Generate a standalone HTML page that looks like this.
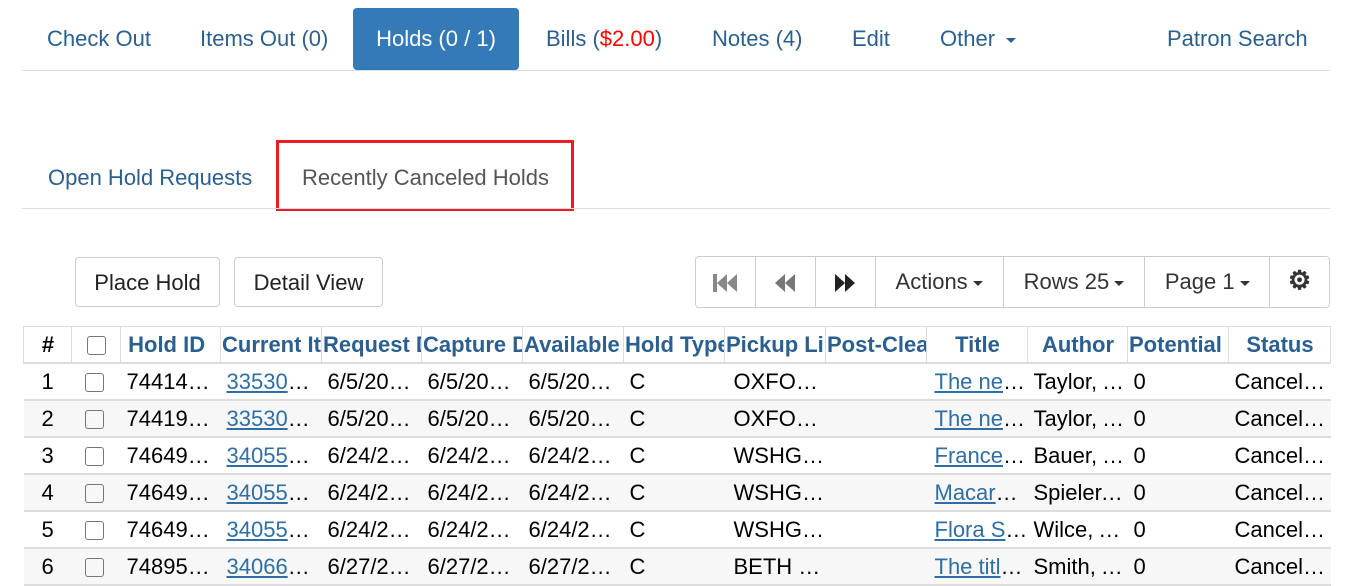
<!DOCTYPE html>
<html><head><style>
body{margin:0;width:1360px;height:556px;overflow:hidden;background:#fff;font-family:"Liberation Sans",sans-serif;font-size:22px;color:#000;position:relative}
.a{position:absolute;white-space:nowrap}
.nav{color:#2a5f8f;top:26px}
.hr{position:absolute;left:22px;width:1308px;height:1px;background:#ddd}
.btn{position:absolute;border:1px solid #ccc;border-radius:4px;background:#fff;height:50px;line-height:50px;text-align:center;color:#222;box-sizing:border-box}
.grp{position:absolute;top:256px;height:52px;left:695px;width:635px;border:1px solid #ccc;border-radius:4px;box-sizing:border-box;display:flex}
.grp div{border-right:1px solid #ccc;height:50px;line-height:50px;text-align:center;color:#333;box-sizing:border-box}
.grp div:last-child{border-right:none}
.car{display:inline-block;width:0;height:0;border-left:5px solid transparent;border-right:5px solid transparent;border-top:5px solid #333;vertical-align:middle;margin-left:5px}
table{position:absolute;left:23px;top:326px;border-collapse:collapse;table-layout:fixed;width:1307px}
td,th{height:35px;padding:0 0 0 6px;overflow:hidden;white-space:nowrap;text-overflow:ellipsis;border-bottom:2px solid #ddd;text-align:left;font-size:22px}
th{border:1px solid #ddd;border-bottom:2px solid #ddd;color:#2a5f8f;padding:0 0 0 1px;text-overflow:clip}
th.c{text-align:center}
tr.g td{background:#f7f7f7}
td a{color:#2f6ea5;text-decoration:underline}
.cb{display:inline-block;width:17px;height:17px;border:1px solid #777;border-radius:3px;vertical-align:middle}
</style></head><body>
<div class="a nav" style="left:47px">Check Out</div>
<div class="a nav" style="left:200px">Items Out (0)</div>
<div class="a" style="left:353px;top:8px;width:166px;height:62px;background:#337ab7;border-radius:4px;color:#fff;text-align:center;line-height:62px">Holds (0 / 1)</div>
<div class="a nav" style="left:546px">Bills (<span style="color:#f00">$2.00</span>)</div>
<div class="a nav" style="left:712px">Notes (4)</div>
<div class="a nav" style="left:852px">Edit</div>
<div class="a nav" style="left:940px">Other <span class="car" style="border-top-color:#2a5f8f"></span></div>
<div class="a nav" style="left:1167px">Patron Search</div>
<div class="hr" style="top:70px"></div>
<div class="a" style="left:48px;top:165px;color:#2a5f8f">Open Hold Requests</div>
<div class="a" style="left:302px;top:165px;color:#555">Recently Canceled Holds</div>
<div class="a" style="left:276px;top:140px;width:292px;height:65px;border:3px solid #ed1c24"></div>
<div class="hr" style="top:208px"></div>
<div class="btn" style="left:75px;top:257px;width:145px">Place Hold</div>
<div class="btn" style="left:234px;top:257px;width:149px">Detail View</div>
<div class="grp">
<div style="width:60px"><svg width="24" height="18" viewBox="0 0 24 18" style="vertical-align:middle"><path d="M0 0h4v18H0zM14 0L4 9l10 9zM24 0L14 9l10 9z" fill="#888"/></svg></div>
<div style="width:60px"><svg width="20" height="18" viewBox="0 0 20 18" style="vertical-align:middle"><path d="M10 0L0 9l10 9zM20 0L10 9l10 9z" fill="#777"/></svg></div>
<div style="width:60px"><svg width="20" height="18" viewBox="0 0 20 18" style="vertical-align:middle"><path d="M0 0l10 9L0 18zM10 0l10 9-10 9z" fill="#222"/></svg></div>
<div style="width:128px">Actions<span class="car"></span></div>
<div style="width:142px">Rows 25<span class="car"></span></div>
<div style="width:125px">Page 1<span class="car"></span></div>
<div style="width:59px;font-size:26px;line-height:46px;font-weight:bold">&#9881;</div>
</div>
<table>
<colgroup><col style="width:48px"><col style="width:49px"><col style="width:100px"><col style="width:101px"><col style="width:100px"><col style="width:101px"><col style="width:101px"><col style="width:101px"><col style="width:101px"><col style="width:101px"><col style="width:101px"><col style="width:100px"><col style="width:101px"><col style="width:102px"></colgroup>
<tr><th class="c" style="color:#000">#</th><th class="c"><span class="cb"></span></th><th>&nbsp;Hold ID</th><th>Current Item</th><th>Request Date</th><th>Capture Date</th><th>Available</th><th>Hold Type</th><th>Pickup Lib</th><th>Post-Clear</th><th class="c">Title</th><th class="c">Author</th><th>Potential</th><th class="c">Status</th></tr>
<tr><td style="padding-left:18px">1</td><td style="padding-left:13px"><span class="cb"></span></td><td>74414000</td><td><a>33530000000</a></td><td>6/5/2019 10:00</td><td>6/5/2019 10:00</td><td>6/5/2019 10:00</td><td>C</td><td style="padding-left:9px">OXFORD LIB</td><td></td><td style="padding-left:8px"><a>The new book</a></td><td>Taylor, Alice</td><td>0</td><td>Canceled Hold</td></tr>
<tr class="g"><td style="padding-left:18px">2</td><td style="padding-left:13px"><span class="cb"></span></td><td>74419000</td><td><a>33530000000</a></td><td>6/5/2019 10:00</td><td>6/5/2019 10:00</td><td>6/5/2019 10:00</td><td>C</td><td style="padding-left:9px">OXFORD LIB</td><td></td><td style="padding-left:8px"><a>The new book</a></td><td>Taylor, Alice</td><td>0</td><td>Canceled Hold</td></tr>
<tr><td style="padding-left:18px">3</td><td style="padding-left:13px"><span class="cb"></span></td><td>74649000</td><td><a>34055000000</a></td><td>6/24/2019 10:00</td><td>6/24/2019 10:00</td><td>6/24/2019 10:00</td><td>C</td><td style="padding-left:9px">WSHGTN LIB</td><td></td><td style="padding-left:8px"><a>France book</a></td><td>Bauer, Anne</td><td>0</td><td>Canceled Hold</td></tr>
<tr class="g"><td style="padding-left:18px">4</td><td style="padding-left:13px"><span class="cb"></span></td><td>74649000</td><td><a>34055000000</a></td><td>6/24/2019 10:00</td><td>6/24/2019 10:00</td><td>6/24/2019 10:00</td><td>C</td><td style="padding-left:9px">WSHGTN LIB</td><td></td><td style="padding-left:8px"><a>Macaroni book</a></td><td>Spieler, Marc</td><td>0</td><td>Canceled Hold</td></tr>
<tr><td style="padding-left:18px">5</td><td style="padding-left:13px"><span class="cb"></span></td><td>74649000</td><td><a>34055000000</a></td><td>6/24/2019 10:00</td><td>6/24/2019 10:00</td><td>6/24/2019 10:00</td><td>C</td><td style="padding-left:9px">WSHGTN LIB</td><td></td><td style="padding-left:8px"><a>Flora Story</a></td><td>Wilce, Anne</td><td>0</td><td>Canceled Hold</td></tr>
<tr class="g"><td style="padding-left:18px">6</td><td style="padding-left:13px"><span class="cb"></span></td><td>74895000</td><td><a>34066000000</a></td><td>6/27/2019 10:00</td><td>6/27/2019 10:00</td><td>6/27/2019 10:00</td><td>C</td><td style="padding-left:9px">BETH LIB</td><td></td><td style="padding-left:8px"><a>The title book</a></td><td>Smith, Anne</td><td>0</td><td>Canceled Hold</td></tr>
</table>
</body></html>
